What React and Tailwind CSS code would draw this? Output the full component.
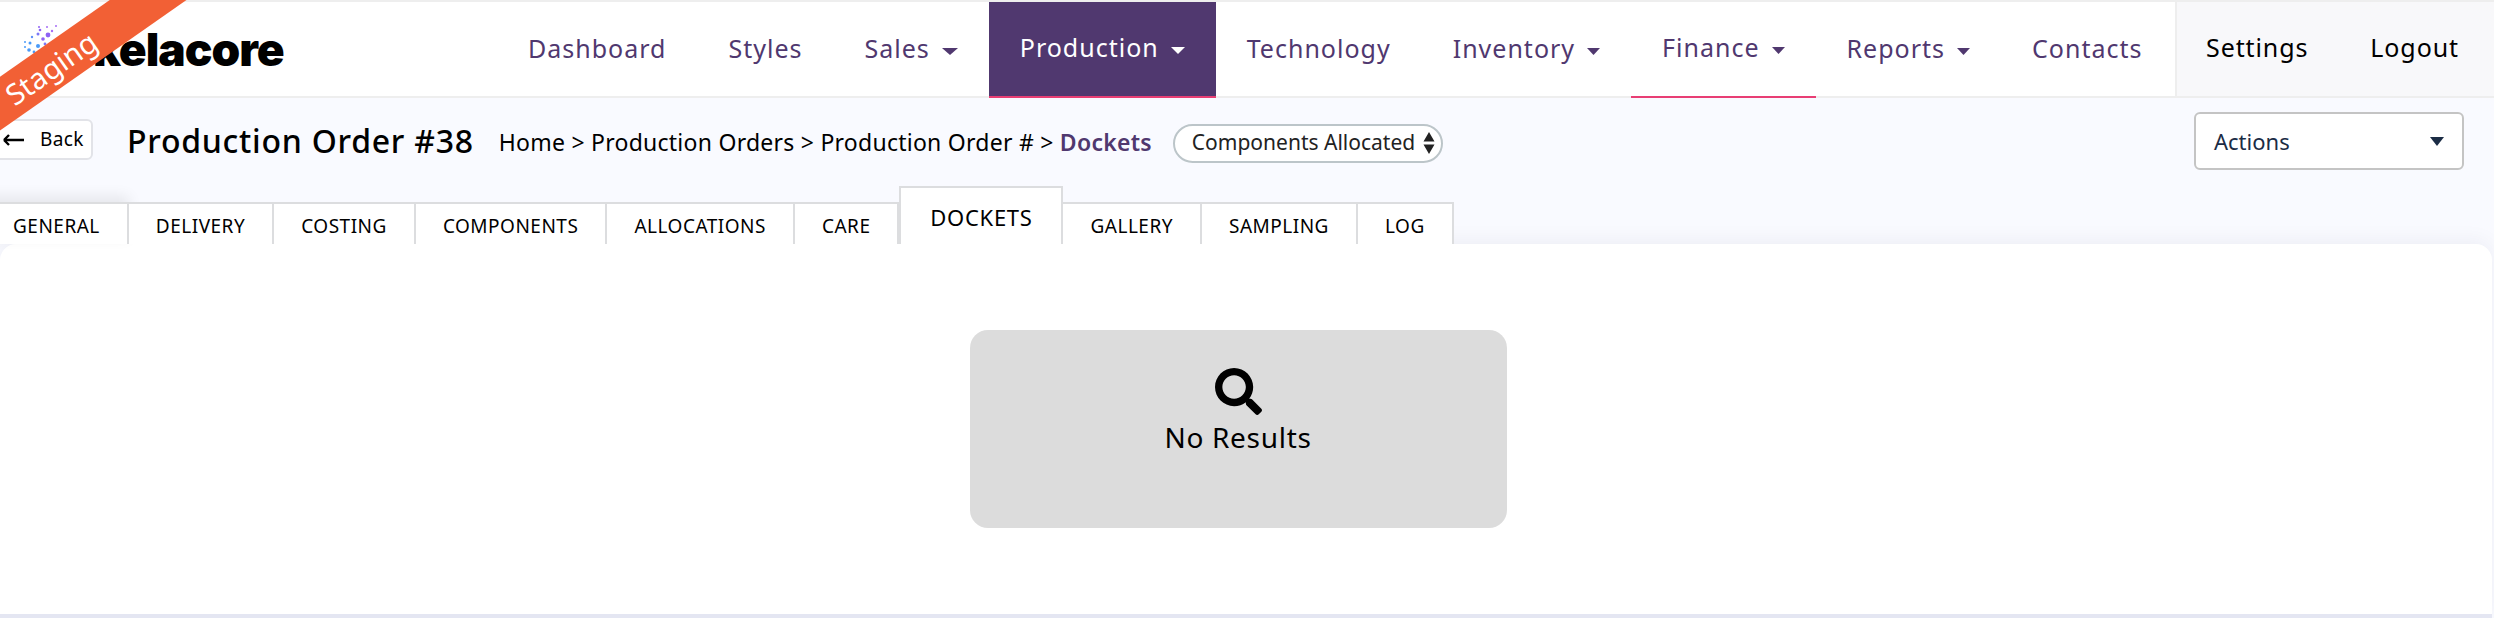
import { FaSearch } from "react-icons/fa";

const navItems = [
    { label: "Dashboard" },
    { label: "Styles" },
    { label: "Sales", caret: 16 },
    { label: "Production", caret: 14, active: true },
    { label: "Technology" },
    { label: "Inventory", caret: 13 },
    { label: "Finance", caret: 13, hovered: true },
    { label: "Reports", caret: 13 },
    { label: "Contacts" },
];

const tabs = ["GENERAL", "DELIVERY", "COSTING", "COMPONENTS", "ALLOCATIONS", "CARE", "DOCKETS", "GALLERY", "SAMPLING", "LOG"];

const Caret = ({ color, width }) => (
    <svg width={width} height="7" viewBox="0 0 14 7" preserveAspectRatio="none" className="ml-[12px] mt-1">
        <path d="M0 0h14L7 7z" fill={color} />
    </svg>
);

// logo dots, in page coordinates
const dots = [
    [48, 35, 2.4, "#8f62f5"], [43, 39, 1.8, "#8f62f5"], [40, 30, 1.3, "#8f62f5"], [38, 34, 1.5, "#7d78f6"],
    [52, 31, 1.2, "#a66cf6"], [47, 27, 1, "#a66cf6"], [39, 27, 1, "#8f62f5"], [32, 37, 1.2, "#5f8ff8"],
    [25, 42, 1, "#4a9af8"], [30, 43, 1.5, "#4a9af8"], [38, 46, 2, "#4a9af8"], [29, 50, 1.8, "#4a9af8"],
    [25, 47, 1, "#4a9af8"], [34, 52, 1.4, "#4a9af8"], [56, 26, 1, "#a66cf6"], [45, 44, 1.4, "#7d78f6"],
];

const App = () => {
    return (
        <div className="relative h-[618px] w-[2494px] overflow-hidden bg-[#f9faff] font-['Noto_Sans',sans-serif] text-black">
            <header className="flex h-[98px] border-b-2 border-t-2 border-[#eeeeee] bg-white">
                <div className="flex w-[497px] items-center pl-[23px]">
                    <svg width="70" height="60" viewBox="23 19 70 60" className="shrink-0">
                        {dots.map(([cx, cy, r, fill], i) => (
                            <circle key={i} cx={cx} cy={cy} r={r} fill={fill} />
                        ))}
                    </svg>
                    <span className="font-['Inter',sans-serif] text-[46px] font-black leading-none tracking-[-1px]">kelacore</span>
                </div>
                <nav className="flex flex-1 items-start text-[25px] tracking-[1px] text-[#50386f]">
                    {navItems.map((item) => (
                        <a
                            key={item.label}
                            className={`flex h-[96px] items-center px-[31px] pb-[2px] ${item.active ? "border-b-2 border-[#e83e74] bg-[#50386f] text-white" : ""} ${item.hovered ? "border-b-2 border-[#e83e74]" : ""}`}
                        >
                            {item.label}
                            {item.caret && <Caret width={item.caret} color={item.active ? "#ffffff" : "#50386f"} />}
                        </a>
                    ))}
                </nav>
                <div className="flex w-[319px] items-center gap-[62px] border-l-2 border-[#eeeeee] bg-[#f8f8fa] pb-[2px] pl-[29px] text-[25px] tracking-[0.9px]">
                    <span>Settings</span>
                    <span>Logout</span>
                </div>
            </header>

            <div className="flex h-[86px] items-center">
                <button className="mb-[3px] ml-[-8px] flex h-[41px] w-[101px] items-center gap-[15px] rounded-md border-2 border-[#e2e3e8] bg-white pl-[9px] text-[19px] tracking-[0.4px]">
                    <svg width="22" height="12" viewBox="0 0 22 12"><path d="M1 6h20M1 6l5-5M1 6l5 5" stroke="#000" strokeWidth="2.4" fill="none" /></svg>
                    Back
                </button>
                <h1 className="ml-[34px] text-[32px] font-medium tracking-[0.75px]">Production Order #38</h1>
                <div className="ml-[25px] mt-[2px] text-[23px] tracking-[0.25px]">
                    Home &gt; Production Orders &gt; Production Order # &gt; <span className="font-semibold text-[#50386f]">Dockets</span>
                </div>
                <div className="ml-[21px] mt-[4px] flex h-[39px] w-[270px] items-center gap-2 rounded-full border-2 border-[#bcc5c9] bg-white pl-[17px] text-[21px] text-[#222222]">
                    Components Allocated
                    <svg width="12" height="22" viewBox="0 0 12 22"><path d="M6 0l5.5 9.5H.5zM6 22l5.5-9.5H.5z" fill="#222" /></svg>
                </div>
                <div className="ml-auto mr-[30px] flex h-[58px] w-[270px] items-center justify-between rounded-md border-2 border-[#c4c4c4] bg-white px-[18px] text-[22px] text-[#1b2c45]">
                    Actions
                    <svg width="14" height="9" viewBox="0 0 14 9"><path d="M0 0h14L7 9z" fill="#1b2c45" /></svg>
                </div>
            </div>

            <div className="relative z-10 ml-[-14px] flex h-[60px] items-end">
                {tabs.map((tab) => (
                    <div
                        key={tab}
                        className={tab === "DOCKETS"
                            ? "flex h-[58px] w-[164px] items-center justify-center border-2 border-b-0 border-[#dcdddf] bg-white pt-[2px] text-[22px] tracking-[0.7px]"
                            : `flex h-[42px] items-center border-r-2 border-t-2 border-[#dcdddf] bg-white px-[27px] pt-[4px] text-[19px] tracking-[0.5px] ${tab === "GENERAL" ? "shadow-[0_-6px_14px_rgba(0,0,0,0.08)]" : ""}`}
                    >
                        {tab}
                    </div>
                ))}
            </div>

            <main className="flex h-[374px] w-[2492px] justify-center rounded-t-2xl border-b-4 border-[#e4e6f2] bg-white pr-[16px] pt-[86px] shadow-[0_-4px_20px_rgba(0,0,60,0.05)]">
                <div className="flex h-[198px] w-[537px] flex-col items-center rounded-[18px] bg-[#dcdcdc] pt-[38px]">
                    <FaSearch size={47} className="text-black" />
                    <span className="mt-[3px] text-[28px] leading-[38px] tracking-[0.7px]">No Results</span>
                </div>
            </main>

            <div className="pointer-events-none absolute left-[-99px] top-[46px] z-20 flex h-[44px] w-[300px] rotate-[-35deg] items-center justify-center bg-[#f26035] text-[29px] text-white">
                Staging
            </div>
        </div>
    );
};

export default App;
